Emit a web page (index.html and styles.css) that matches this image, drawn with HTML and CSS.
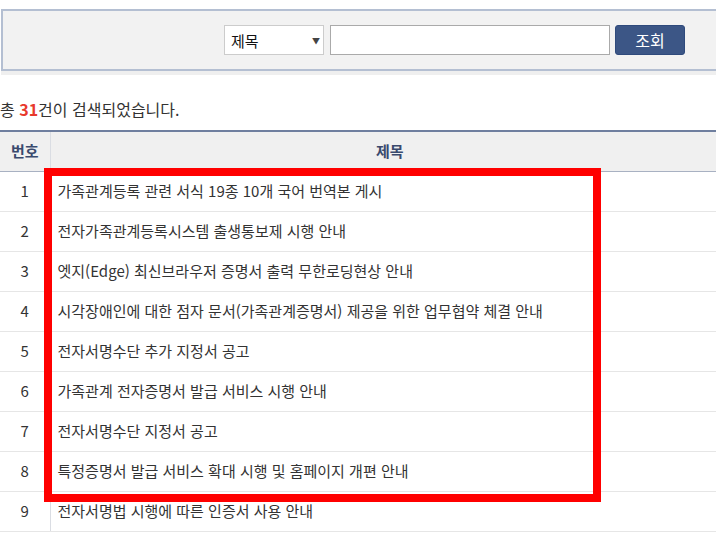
FILE: index.html
```html
<!DOCTYPE html>
<html lang="ko">
  <head>
    <meta charset="utf-8" />
    <meta name="viewport" content="width=device-width, initial-scale=1.0" />
    <title>공지사항</title>
    <link rel="stylesheet" href="styles.css">
  </head>

  <body>
    <div class="side">
      <form class="search">
        <div class="select">제목<span class="arrow">▼</span></div>
        <input type="text" class="keyword" />
        <button type="button" class="btn">조회</button>
      </form>

      <p class="count">총 <strong>31</strong>건이 검색되었습니다.</p>

      <table class="list">
        <colgroup>
          <col class="col-no" />
          <col />
        </colgroup>
        <thead>
          <tr>
            <th class="no">번호</th>
            <th>제목</th>
          </tr>
        </thead>
        <tbody>
          <tr><td class="no">1</td><td>가족관계등록 관련 서식 19종 10개 국어 번역본 게시</td></tr>
          <tr><td class="no">2</td><td>전자가족관계등록시스템 출생통보제 시행 안내</td></tr>
          <tr><td class="no">3</td><td>엣지(Edge) 최신브라우저 증명서 출력 무한로딩현상 안내</td></tr>
          <tr><td class="no">4</td><td>시각장애인에 대한 점자 문서(가족관계증명서) 제공을 위한 업무협약 체결 안내</td></tr>
          <tr><td class="no">5</td><td>전자서명수단 추가 지정서 공고</td></tr>
          <tr><td class="no">6</td><td>가족관계 전자증명서 발급 서비스 시행 안내</td></tr>
          <tr><td class="no">7</td><td>전자서명수단 지정서 공고</td></tr>
          <tr><td class="no">8</td><td>특정증명서 발급 서비스 확대 시행 및 홈페이지 개편 안내</td></tr>
          <tr><td class="no">9</td><td>전자서명법 시행에 따른 인증서 사용 안내</td></tr>
        </tbody>
      </table>

      <!-- 강조 표시 -->
      <div class="mark"></div>
    </div>
  </body>
</html>
```

FILE: styles.css
```css
body {
  margin: 0;
  overflow: hidden;
  font-family: "Noto Sans CJK KR", "Noto Sans", sans-serif;
  color: #333;
}

.side {
  position: relative;
  width: 729px;
  padding-top: 9px;
}

.search {
  display: flex;
  align-items: center;
  gap: 6px;
  height: 58px;
  margin-left: 1px;
  padding-left: 221px;
  background-color: #f2f2f2;
  border: 2px solid #b4bfd2;
  border-right: 0;
  box-shadow: 0 4px 0 #efefef;
}

.select {
  display: flex;
  align-items: center;
  justify-content: space-between;
  box-sizing: border-box;
  width: 100px;
  height: 30px;
  padding: 0 3px 0 6px;
  background: #fff;
  border: 1px solid #ccc;
  font-size: 15px;
  color: #111;
}

.arrow {
  font-size: 8px;
  color: #444;
}

.keyword {
  box-sizing: border-box;
  width: 280px;
  height: 30px;
  margin: 0;
  border: 1px solid #aaa;
}

.btn {
  width: 70px;
  height: 30px;
  margin-left: -1px;
  border: 1px solid #2f4a7c;
  border-radius: 3px;
  background-color: #3c5686;
  color: #fff;
  font-family: inherit;
  font-size: 16px;
}

.count {
  margin: 28px 0 0;
  height: 31px;
  font-size: 16px;
  line-height: 20px;
}

.count strong {
  color: #e8392c;
}

.list {
  width: 729px;
  table-layout: fixed;
  border-collapse: collapse;
  border-top: 2px solid #6f7f9f;
  font-size: 15px;
}

.col-no {
  width: 50px;
}

.list th {
  height: 37px;
  padding: 0 0 2px;
  background-color: #f0f0f0;
  border-bottom: 1px solid #a8b1c2;
  color: #3a4a6e;
  font-weight: bold;
}

.list td {
  height: 37px;
  padding: 0 0 2px 7px;
  border-bottom: 1px solid #e6e6e6;
  white-space: nowrap;
}

.list .no {
  padding: 0 0 2px;
  text-align: center;
  border-right: 1px solid #dadde3;
}

.mark {
  position: absolute;
  left: 44px;
  top: 168px;
  width: 541px;
  height: 318px;
  border: 8px solid #ff0000;
}
```
